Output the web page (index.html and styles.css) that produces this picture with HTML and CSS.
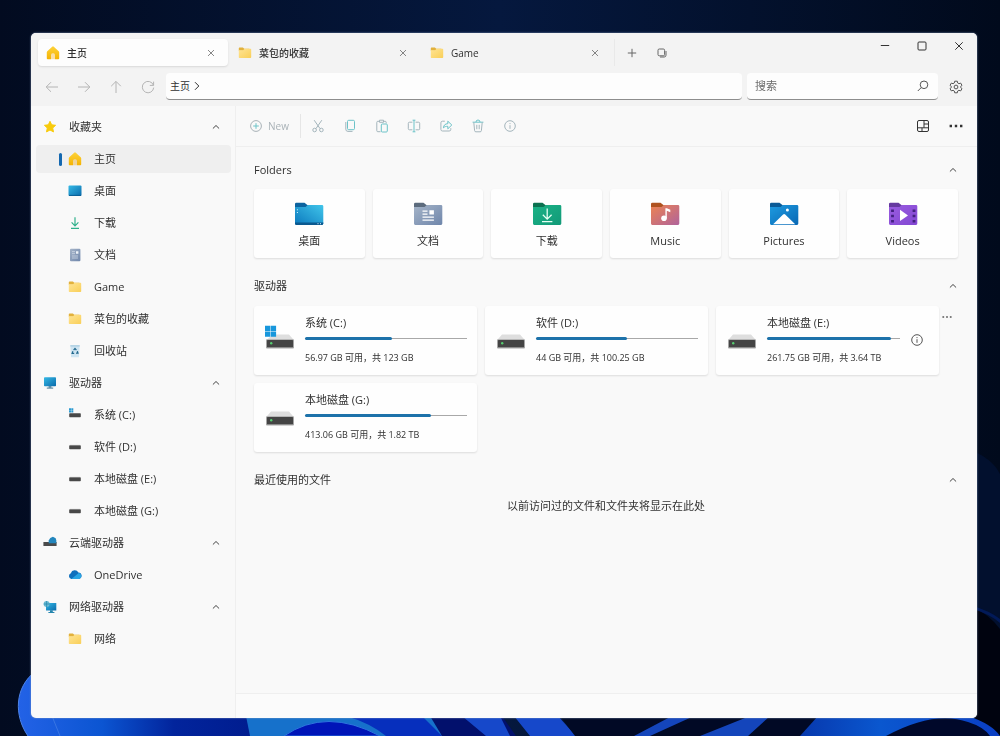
FILE: index.html
```
<!DOCTYPE html>
<html lang="zh-CN">
<head>
    <meta charset="UTF-8">
    <meta name="viewport" content="width=device-width, initial-scale=1.0">
    <title>主页 - Files</title>
    <link rel="stylesheet" href="styles.css">
</head>
<body>
    <!-- shared icons -->
    <svg class="sprite" aria-hidden="true">
        <defs>
            <linearGradient id="g-gold" x1="0" y1="0" x2="0" y2="1"><stop offset="0" stop-color="#fdd23a"/><stop offset="1" stop-color="#f5b301"/></linearGradient>
            <linearGradient id="g-yellow" x1="0" y1="0" x2="1" y2="1"><stop offset="0" stop-color="#ffe494"/><stop offset="1" stop-color="#f9cf58"/></linearGradient>
            <linearGradient id="g-blue" x1="0" y1="0" x2="1" y2="1"><stop offset="0" stop-color="#35b9e6"/><stop offset="1" stop-color="#0a6bab"/></linearGradient>
            <linearGradient id="g-desk" x1="0" y1="1" x2="1" y2="0"><stop offset="0" stop-color="#0b78bd"/><stop offset="1" stop-color="#41c5ea"/></linearGradient>
            <linearGradient id="g-doc" x1="0" y1="0" x2="1" y2="1"><stop offset="0" stop-color="#a5b4c8"/><stop offset="1" stop-color="#6f86ab"/></linearGradient>
            <linearGradient id="g-down" x1="0" y1="0" x2="1" y2="1"><stop offset="0" stop-color="#1bb286"/><stop offset="1" stop-color="#129a78"/></linearGradient>
            <linearGradient id="g-music" x1="0" y1="0" x2="1" y2="1"><stop offset="0" stop-color="#ec8352"/><stop offset="1" stop-color="#b0639b"/></linearGradient>
            <linearGradient id="g-pic" x1="0" y1="0" x2="1" y2="1"><stop offset="0" stop-color="#1e9be0"/><stop offset="1" stop-color="#0867b4"/></linearGradient>
            <linearGradient id="g-video" x1="0" y1="0" x2="1" y2="1"><stop offset="0" stop-color="#9a5ce0"/><stop offset="1" stop-color="#8247d2"/></linearGradient>
        </defs>
        <symbol id="i-home" viewBox="0 0 14 14"><path d="M6.2.7a1.2 1.2 0 0 1 1.6 0l4.9 4.5c.3.3.5.7.5 1.1v5.9c0 .7-.5 1.1-1.1 1.1H9V9.2a2 2 0 0 0-4 0v4.1H1.9c-.6 0-1.1-.4-1.1-1.1V6.3c0-.4.2-.8.5-1.1z" fill="url(#g-gold)"/><path d="M5 9.2a2 2 0 0 1 4 0v4.1H5z" fill="#eda20c" opacity=".35"/></symbol>
        <symbol id="i-star" viewBox="0 0 14 14"><path d="M7 1.3l1.7 3.5 3.9.5-2.9 2.7.8 3.9L7 10l-3.5 1.9.8-3.9-2.9-2.7 3.9-.5z" fill="#f8cb0c" stroke="#f8cb0c" stroke-linejoin="round"/></symbol>
        <symbol id="i-folder" viewBox="0 0 14 14"><path d="M.8 2.2c0-.4.3-.7.7-.7h3.4l1.4 1.3h5v2H.8z" fill="#e2b13c"/><path d="M.8 4.2h4.4l1.3-1.4h6c.4 0 .7.3.7.7v7.7c0 .4-.3.7-.7.7h-11c-.4 0-.7-.3-.7-.7z" fill="url(#g-yellow)"/></symbol>
        <symbol id="i-desktop" viewBox="0 0 14 14"><rect x=".5" y="1.5" width="13" height="10.5" rx="1" fill="url(#g-blue)"/><path d="M1 11.4h12" stroke="#0b5f94"/></symbol>
        <symbol id="i-download" viewBox="0 0 14 14"><path d="M7 1.3v8.2M3.6 6.4L7 9.8l3.4-3.4M3 12.4h8" fill="none" stroke="#2fb08b" stroke-width="1.2"/></symbol>
        <symbol id="i-document" viewBox="0 0 14 14"><rect x="2" y=".8" width="10.4" height="12.4" rx="1" fill="url(#g-doc)"/><path d="M4 3.7h3M4 5.7h3M4 8h6M4 10h6" stroke="#e6edf5" stroke-width=".6"/><path d="M8 3.2h2.4v2.6H8z" fill="#eef3f8"/></symbol>
        <symbol id="i-recycle" viewBox="0 0 14 14"><path d="M2.3 1.3h9.4l-.8 11.9H3.1z" fill="#cfe5f2"/><path d="M2.3 1.3h9.4v1.2H2.4z" fill="#a9cce0"/><path d="M5.6 6.1L7 4.4l1.4 1.7M9.3 7.1l.7 2.1H8M6.2 9.4H4.1l.8-2.2" fill="none" stroke="#23698e" stroke-width="1.2"/></symbol>
        <symbol id="i-monitor" viewBox="0 0 14 14"><rect x="1" y="1.3" width="12" height="8.9" rx=".8" fill="url(#g-blue)"/><path d="M5.6 10.2h2.8v1.5H5.6z" fill="#417b9b"/><path d="M3.8 12.1h6.4" stroke="#477a94"/></symbol>
        <symbol id="i-disk" viewBox="0 0 14 14"><rect x="1.2" y="5.2" width="11.6" height="4" rx=".8" fill="#484848"/><path d="M2 5.4h10" stroke="#888" stroke-width=".7"/></symbol>
        <symbol id="i-sysdisk" viewBox="0 0 14 14"><path d="M1 .3h2v2H1zM3.3.3h2v2h-2zM1 2.6h2v2H1zM3.3 2.6h2v2h-2z" fill="#2b9ad1"/><rect x="1.2" y="5.2" width="11.6" height="4" rx=".7" fill="#484848"/></symbol>
        <symbol id="i-clouddisk" viewBox="0 0 14 14"><rect x=".4" y="6" width="13.2" height="4" rx=".5" fill="#4b4b4b"/><path d="M5.7 7.3V4.4l1.6-2.5 2.6-1.2 2.8 1.5.6 2.2v2.9z" fill="#2386bd"/></symbol>
        <symbol id="i-onedrive" viewBox="0 0 14 14"><path d="M3.3 10.9a3 3 0 0 1-.5-5.7 4.2 4.2 0 0 1 7.6-.8 3.3 3.3 0 0 1 .7 6.5z" fill="#1070bd"/><path d="M3.3 10.9l7.5-6c3.6.7 3.2 6-.2 6z" fill="#29a5e4"/></symbol>
        <symbol id="i-netdisk" viewBox="0 0 14 14"><path d="M3 3h10.3v7.4H3z" fill="url(#g-blue)"/><path d="M7 10.2h2.8v2.2H7zM5.4 12.1h6v1h-6z" fill="#2686ad"/><circle cx="3.6" cy="4" r="3" fill="#6cbbd3"/><path d="M3.6 1v6M.7 4h6" stroke="#2686ad" stroke-width=".7"/></symbol>
        <symbol id="i-close" viewBox="0 0 10 10"><path d="M1.3 1.3l7.4 7.4M8.7 1.3L1.3 8.7"/></symbol>
        <symbol id="i-up" viewBox="0 0 10 10"><path d="M1.9 6.5L5 3.5l3.1 3"/></symbol>
        <symbol id="i-info" viewBox="0 0 14 14"><circle cx="7" cy="7" r="5.3"/><path d="M7 6.2v3.6M7 4.1v1"/></symbol>
        <symbol id="i-dots" viewBox="0 0 14 14"><path d="M.6 5.8H3v2.4H.6zM5.8 5.8h2.4v2.4H5.8zM11 5.8h2.4v2.4H11z" fill="currentColor" stroke="none"/></symbol>
        <symbol id="i-drive" viewBox="0 0 30 26"><path d="M6 10.4h18l4.4 5H1.6z" fill="#dedede"/><rect x="1" y="15.2" width="28" height="9.3" rx="1" fill="#a5a5a5"/><rect x="2" y="16" width="26" height="7.3" rx=".5" fill="#444"/><circle cx="6.2" cy="19.2" r="1.2" fill="#55ce70"/></symbol>
        <symbol id="i-windrive" viewBox="0 0 30 26"><path d="M8 10.4h16l4.4 5H2z" fill="#dedede"/><rect x="1" y="15.2" width="28" height="9.3" rx="1" fill="#a5a5a5"/><rect x="2" y="16" width="26" height="7.3" rx=".5" fill="#444"/><circle cx="6.2" cy="19.2" r="1.2" fill="#55ce70"/><path d="M0 1.7h5.3V7H0zM5.8 1.7h5.3V7H5.8zM0 7.5h5.3v5.3H0zM5.8 7.5h5.3v5.3H5.8z" fill="#1897dc"/></symbol>
    </svg>

    <svg class="wallpaper" viewBox="0 0 1000 736" preserveAspectRatio="none" aria-hidden="true">
        <defs>
            <linearGradient id="w-sky"><stop offset="0" stop-color="#020b20"/><stop offset=".5" stop-color="#05183e"/><stop offset="1" stop-color="#010a1c"/></linearGradient>
            <linearGradient id="w-petal"><stop offset="0" stop-color="#2362e6"/><stop offset=".35" stop-color="#0b55d2"/><stop offset=".65" stop-color="#02249c"/><stop offset="1" stop-color="#001c8e"/></linearGradient>
            <linearGradient id="w-right"><stop offset="0" stop-color="#0738ad"/><stop offset=".4" stop-color="#0a57cf"/><stop offset="1" stop-color="#0b3fc4"/></linearGradient>
        </defs>
        <path d="M0 0h1000v736H0z" fill="url(#w-sky)"/>
        <path d="M970 450q22 8 30 24v262h-30z" fill="#02102e"/>
        <path d="M970 605q20 10 30 24v107h-30z" fill="#00030f"/>
        <path d="M970 605q20 6 30 14v4q-10-9-30-15z" fill="#021a58"/>
        <path d="M36 671C14 687 14 716 28 736h230V671z" fill="url(#w-petal)"/>
        <path d="M36 671C14 687 14 716 28 736" fill="none" stroke="#4c83e8"/>
        <path d="M52 716l8 20" stroke="#4e86e6" opacity=".6"/>
        <path d="M246 716h190l12 20H250z" fill="#1671cb"/>
        <path d="M284 736q42-29 96 0z" fill="#0015b8" stroke="#2c76de"/>
        <path d="M346 716h76l20 20h-56q-16-13-40-20z" fill="#062fbd"/>
        <path d="M430 716h72l14 20h-74z" fill="#02106c"/>
        <path d="M462 716h38l10 20h-24zM514 716h44l18 20h-46z" fill="#1648ca"/>
        <path d="M560 716h290l-50 20H575z" fill="#010925"/>
        <path d="M650 736l44-20h-22l-38 20zM700 736l50-20h20l-22 20z" fill="#1445bb"/>
        <path d="M800 736l18-20h150q24 8 32 20z" fill="url(#w-right)"/>
        <path d="M886 736q48-26 82-14 16 5 22 14z" fill="#00082a"/>
    </svg>

    <div class="window">
        <header class="header">
            <div class="titlebar">
                <div class="tabs">
                    <div class="tab active">
                        <button class="tab-label"><svg class="icon"><use href="#i-home"/></svg>主页</button>
                        <button class="tab-close" aria-label="关闭 主页"><svg class="line small"><use href="#i-close"/></svg></button>
                    </div>
                    <div class="tab">
                        <button class="tab-label"><svg class="icon"><use href="#i-folder"/></svg>菜包的收藏</button>
                        <button class="tab-close" aria-label="关闭 菜包的收藏"><svg class="line small"><use href="#i-close"/></svg></button>
                    </div>
                    <div class="tab">
                        <button class="tab-label"><svg class="icon"><use href="#i-folder"/></svg>Game</button>
                        <button class="tab-close" aria-label="关闭 Game"><svg class="line small"><use href="#i-close"/></svg></button>
                    </div>
                    <div class="tab-actions">
                        <button aria-label="新标签页"><svg class="line small" viewBox="0 0 10 10"><path d="M5 .8v8.4M.8 5h8.4"/></svg></button>
                        <button aria-label="标签页列表"><svg class="line small" viewBox="0 0 10 10"><rect x="1" y="1" width="6.6" height="6.8" rx="1.3"/><path d="M3 9h4.2A1.8 1.8 0 0 0 9 7.2V3"/></svg></button>
                    </div>
                </div>
                <div class="window-controls">
                    <button aria-label="最小化"><svg class="line small" viewBox="0 0 10 10"><path d="M.8 4.5h8.4"/></svg></button>
                    <button aria-label="最大化"><svg class="line small" viewBox="0 0 10 10"><rect x="1" y="1" width="8" height="8" rx="1"/></svg></button>
                    <button aria-label="关闭"><svg class="line small"><use href="#i-close"/></svg></button>
                </div>
            </div>
            <div class="navbar">
                <div class="nav-buttons">
                    <button aria-label="后退"><svg class="line" viewBox="0 0 14 14"><path d="M13 7H1.4M6 2.2L1.2 7 6 11.8"/></svg></button>
                    <button aria-label="前进"><svg class="line" viewBox="0 0 14 14"><path d="M1 7h11.6M8 2.2L12.8 7 8 11.8"/></svg></button>
                    <button aria-label="向上"><svg class="line" viewBox="0 0 14 14"><path d="M7 13V1.6M2.2 6.2L7 1.4l4.8 4.8"/></svg></button>
                    <button aria-label="刷新"><svg class="line" viewBox="0 0 14 14"><path d="M12.4 5.2A5.7 5.7 0 1 0 12.7 7.6M12.6 1.6v3.8H8.8"/></svg></button>
                </div>
                <nav class="address" aria-label="路径">
                    <a href="#">主页</a>
                    <svg class="line small" viewBox="0 0 10 10"><path d="M3 1.2L6.8 5 3 8.8"/></svg>
                </nav>
                <form class="search">
                    <input type="search" placeholder="搜索" aria-label="搜索">
                    <button type="button" aria-label="开始搜索"><svg class="line" viewBox="0 0 14 14"><circle cx="8" cy="5.8" r="3.8"/><path d="M5.2 8.6L1.8 12"/></svg></button>
                </form>
                <button class="settings" aria-label="设置"><svg class="line" viewBox="0 0 14 14"><path d="M5.7 1.2h2.6l.4 1.8 1.2.7 1.8-.6L13 5.4l-1.4 1.2v.8L13 8.6l-1.3 2.3-1.8-.6-1.2.7-.4 1.8H5.7L5.3 11l-1.2-.7-1.8.6L1 8.6l1.4-1.2v-.8L1 5.4l1.3-2.3 1.8.6L5.3 3z"/><circle cx="7" cy="7" r="1.9"/></svg></button>
            </div>
        </header>

        <div class="body">
            <aside class="sidebar">
                <button class="group"><svg class="icon"><use href="#i-star"/></svg><span>收藏夹</span><svg class="line small"><use href="#i-up"/></svg></button>
                <a class="item selected" href="#"><svg class="icon"><use href="#i-home"/></svg>主页</a>
                <a class="item" href="#"><svg class="icon"><use href="#i-desktop"/></svg>桌面</a>
                <a class="item" href="#"><svg class="icon"><use href="#i-download"/></svg>下载</a>
                <a class="item" href="#"><svg class="icon"><use href="#i-document"/></svg>文档</a>
                <a class="item" href="#"><svg class="icon"><use href="#i-folder"/></svg>Game</a>
                <a class="item" href="#"><svg class="icon"><use href="#i-folder"/></svg>菜包的收藏</a>
                <a class="item" href="#"><svg class="icon"><use href="#i-recycle"/></svg>回收站</a>
                <button class="group"><svg class="icon"><use href="#i-monitor"/></svg><span>驱动器</span><svg class="line small"><use href="#i-up"/></svg></button>
                <a class="item" href="#"><svg class="icon"><use href="#i-sysdisk"/></svg>系统 (C:)</a>
                <a class="item" href="#"><svg class="icon"><use href="#i-disk"/></svg>软件 (D:)</a>
                <a class="item" href="#"><svg class="icon"><use href="#i-disk"/></svg>本地磁盘 (E:)</a>
                <a class="item" href="#"><svg class="icon"><use href="#i-disk"/></svg>本地磁盘 (G:)</a>
                <button class="group"><svg class="icon"><use href="#i-clouddisk"/></svg><span>云端驱动器</span><svg class="line small"><use href="#i-up"/></svg></button>
                <a class="item" href="#"><svg class="icon"><use href="#i-onedrive"/></svg>OneDrive</a>
                <button class="group"><svg class="icon"><use href="#i-netdisk"/></svg><span>网络驱动器</span><svg class="line small"><use href="#i-up"/></svg></button>
                <a class="item" href="#"><svg class="icon"><use href="#i-folder"/></svg>网络</a>
            </aside>

            <main class="main">
                <div class="toolbar">
                    <button class="new"><svg class="line" viewBox="0 0 14 14"><circle cx="7" cy="7" r="5.4"/><path class="teal" d="M7 4.2v5.6M4.2 7h5.6"/></svg>New</button>
                    <div class="commands">
                        <button aria-label="剪切"><svg class="line" viewBox="0 0 14 14"><path d="M3.2 1.2l5.9 8.5M10.8 1.2L4.9 9.7"/><circle cx="3.6" cy="11" r="1.8"/><circle cx="10.4" cy="11" r="1.8"/></svg></button>
                        <button aria-label="复制"><svg class="line" viewBox="0 0 14 14"><path d="M2.8 3v7.2a2.2 2.2 0 0 0 2.2 2.2h4.5"/><rect class="teal" x="4.5" y="1.3" width="7" height="9.4" rx="1.2"/></svg></button>
                        <button aria-label="粘贴"><svg class="line" viewBox="0 0 14 14"><path d="M5.5 12.7H2.8a1 1 0 0 1-1-1V3.3a1 1 0 0 1 1-1h1.6M8.6 2.3h1.6a1 1 0 0 1 1 1v1M4.5 1.2h4v2.1h-4z"/><rect class="teal" x="6.3" y="5" width="6" height="8" rx="1"/></svg></button>
                        <button aria-label="重命名"><svg class="line" viewBox="0 0 14 14"><path d="M5.4 3.2H2.5a1.2 1.2 0 0 0-1.2 1.2v5.2a1.2 1.2 0 0 0 1.2 1.2h2.9M8.6 3.2h2.9a1.2 1.2 0 0 1 1.2 1.2v5.2a1.2 1.2 0 0 1-1.2 1.2H8.6"/><path class="teal" d="M7 1.2v11.6M5.6 1.2h2.8M5.6 12.8h2.8"/></svg></button>
                        <button aria-label="共享"><svg class="line" viewBox="0 0 14 14"><path d="M5.8 2.2H3.5a1.6 1.6 0 0 0-1.6 1.6v6.6A1.6 1.6 0 0 0 3.5 12h6.7a1.6 1.6 0 0 0 1.6-1.6V9.2"/><path class="teal" d="M4.4 8.8c.3-2.6 1.8-4.1 4.4-4.1V2.2l4 3.8-4 3.8V7.3c-2 0-3.2.4-4.4 1.5z"/></svg></button>
                        <button aria-label="删除"><svg class="line" viewBox="0 0 14 14"><path class="teal" d="M1.6 3.2h10.8M5 3a2 2 0 0 1 4 0"/><path d="M2.8 3.4l.8 8.2a1.3 1.3 0 0 0 1.3 1.2h4.2a1.3 1.3 0 0 0 1.3-1.2l.8-8.2M5.8 5.8v4.4M8.2 5.8v4.4"/></svg></button>
                        <button aria-label="属性"><svg class="line"><use href="#i-info"/></svg></button>
                    </div>
                    <div class="view-options">
                        <button aria-label="布局"><svg class="line" viewBox="0 0 14 14"><rect x="1.5" y="1.5" width="11" height="11" rx="1.5"/><path d="M8 1.5v7.3M1.5 8.8h11M8 5h4.5M6 8.8v3.7"/></svg></button>
                        <button aria-label="更多"><svg class="line"><use href="#i-dots"/></svg></button>
                    </div>
                </div>

                <div class="content">
                    <section>
                        <button class="section-title"><span>Folders</span><svg class="line small"><use href="#i-up"/></svg></button>
                        <div class="folders">
                            <a class="folder" href="#">
                                <svg viewBox="0 0 30 26"><path d="M1 3a1.3 1.3 0 0 1 1.3-1.3h8.2L14 4.5V8H1z" fill="#0c639f"/><path d="M1 6h10.5L14 4h14a1.3 1.3 0 0 1 1.3 1.3v17.3a1.3 1.3 0 0 1-1.3 1.3H2.3A1.3 1.3 0 0 1 1 22.6z" fill="url(#g-desk)"/><path d="M1 21.6h28.3v1a1.3 1.3 0 0 1-1.3 1.3H2.3A1.3 1.3 0 0 1 1 22.6z" fill="#0b598f"/><path d="M3.4 8.3v1M3.4 11v1M23.5 22.7h1M26 22.7h1" stroke="#d6f3ff"/></svg>
                                桌面
                            </a>
                            <a class="folder" href="#">
                                <svg viewBox="0 0 30 26"><path d="M1 3a1.3 1.3 0 0 1 1.3-1.3h8.2L14 4.5V8H1z" fill="#5c6b7d"/><path d="M1 6h10.5L14 4h14a1.3 1.3 0 0 1 1.3 1.3v17.3a1.3 1.3 0 0 1-1.3 1.3H2.3A1.3 1.3 0 0 1 1 22.6z" fill="url(#g-doc)"/><path d="M9.5 10.2h5M9.5 13.2h5M9.5 16.2h11.4M9.5 19.2h11.4" stroke="#fff" stroke-width="1.2"/><path d="M16.4 9.2h4.5v4.3h-4.5z" fill="#fff"/></svg>
                                文档
                            </a>
                            <a class="folder" href="#">
                                <svg viewBox="0 0 30 26"><path d="M1 3a1.3 1.3 0 0 1 1.3-1.3h8.2L14 4.5V8H1z" fill="#0c7150"/><path d="M1 6h10.5L14 4h14a1.3 1.3 0 0 1 1.3 1.3v17.3a1.3 1.3 0 0 1-1.3 1.3H2.3A1.3 1.3 0 0 1 1 22.6z" fill="url(#g-down)"/><path d="M15.2 7.5v10.3M10.8 13.7l4.4 4.4 4.4-4.4M10 20.7h10.4" fill="none" stroke="#e5fff4" stroke-width="1.3"/></svg>
                                下载
                            </a>
                            <a class="folder" href="#">
                                <svg viewBox="0 0 30 26"><path d="M1 3a1.3 1.3 0 0 1 1.3-1.3h8.2L14 4.5V8H1z" fill="#af521f"/><path d="M1 6h10.5L14 4h14a1.3 1.3 0 0 1 1.3 1.3v17.3a1.3 1.3 0 0 1-1.3 1.3H2.3A1.3 1.3 0 0 1 1 22.6z" fill="url(#g-music)"/><circle cx="14" cy="17.2" r="2.8" fill="#fff"/><path d="M15.4 17.3V7.2h1.5l3.4 1.6v2.5l-3.5-1.5v7.5z" fill="#fff"/></svg>
                                Music
                            </a>
                            <a class="folder" href="#">
                                <svg viewBox="0 0 30 26"><path d="M1 3a1.3 1.3 0 0 1 1.3-1.3h8.2L14 4.5V8H1z" fill="#0b5a96"/><path d="M1 6h10.5L14 4h14a1.3 1.3 0 0 1 1.3 1.3v17.3a1.3 1.3 0 0 1-1.3 1.3H2.3A1.3 1.3 0 0 1 1 22.6z" fill="url(#g-pic)"/><path d="M4.1 23.2l10-9.7a1.5 1.5 0 0 1 2.1 0l10 9.7z" fill="#fff"/><circle cx="18.4" cy="8.9" r="1.5" fill="#fff"/></svg>
                                Pictures
                            </a>
                            <a class="folder" href="#">
                                <svg viewBox="0 0 30 26"><path d="M1 3a1.3 1.3 0 0 1 1.3-1.3h8.2L14 4.5V8H1z" fill="#65399f"/><path d="M1 6h10.5L14 4h14a1.3 1.3 0 0 1 1.3 1.3v17.3a1.3 1.3 0 0 1-1.3 1.3H2.3A1.3 1.3 0 0 1 1 22.6z" fill="url(#g-video)"/><path d="M4.5 8.5v14M26 8.5v14" stroke="#432080" stroke-width="2.8" stroke-dasharray="2.6 2.6"/><path d="M12 8.8l8 5.6-8 5.6z" fill="#fff"/></svg>
                                Videos
                            </a>
                        </div>
                    </section>

                    <section>
                        <button class="section-title"><span>驱动器</span><svg class="line small"><use href="#i-up"/></svg></button>
                        <div class="drives-row">
                            <div class="drives">
                                <a class="drive" href="#">
                                    <svg class="drive-icon"><use href="#i-windrive"/></svg>
                                    <div class="drive-info">
                                        <span>系统 (C:)</span>
                                        <div class="usage"><div class="used" style="width: 54%"></div></div>
                                        <small>56.97 GB 可用，共 123 GB</small>
                                    </div>
                                </a>
                                <a class="drive" href="#">
                                    <svg class="drive-icon"><use href="#i-drive"/></svg>
                                    <div class="drive-info">
                                        <span>软件 (D:)</span>
                                        <div class="usage"><div class="used" style="width: 56%"></div></div>
                                        <small>44 GB 可用，共 100.25 GB</small>
                                    </div>
                                </a>
                                <a class="drive" href="#">
                                    <svg class="drive-icon"><use href="#i-drive"/></svg>
                                    <div class="drive-info">
                                        <span>本地磁盘 (E:)</span>
                                        <div class="usage"><div class="used" style="width: 93%"></div></div>
                                        <small>261.75 GB 可用，共 3.64 TB</small>
                                    </div>
                                    <svg class="line drive-hint"><use href="#i-info"/></svg>
                                </a>
                                <a class="drive" href="#">
                                    <svg class="drive-icon"><use href="#i-drive"/></svg>
                                    <div class="drive-info">
                                        <span>本地磁盘 (G:)</span>
                                        <div class="usage"><div class="used" style="width: 78%"></div></div>
                                        <small>413.06 GB 可用，共 1.82 TB</small>
                                    </div>
                                </a>
                            </div>
                            <button class="drives-more" aria-label="更多选项"><svg class="line small"><use href="#i-dots"/></svg></button>
                        </div>
                    </section>

                    <section>
                        <button class="section-title"><span>最近使用的文件</span><svg class="line small"><use href="#i-up"/></svg></button>
                        <p class="empty">以前访问过的文件和文件夹将显示在此处</p>
                    </section>
                </div>

                <footer class="statusbar"></footer>
            </main>
        </div>
    </div>
</body>
</html>
```

FILE: styles.css
```
* {
    box-sizing: border-box;
}

body {
    margin: 0;
    min-height: 100vh;
    display: flex;
    padding: 33px 23px 18px 31px;
    background-color: #020b20;
    color: #303030;
    font-family: "Open Sans", "Noto Sans CJK SC", sans-serif;
    font-size: 11px;
    line-height: 16px;
}

button {
    border: 0;
    padding: 0;
    background: none;
    color: inherit;
    font: inherit;
    text-align: left;
    cursor: pointer;
    display: flex;
    align-items: center;
    justify-content: center;
}

a {
    color: inherit;
    text-decoration: none;
}

svg {
    display: block;
    flex: none;
}

.sprite {
    position: absolute;
    width: 0;
    height: 0;
}

.wallpaper {
    position: fixed;
    inset: 0;
    width: 100%;
    height: 100%;
    z-index: -1;
}

.icon {
    width: 14px;
    height: 14px;
}

.line {
    width: 14px;
    height: 14px;
    fill: none;
    stroke: currentColor;
    stroke-width: 1;
}

.line.small {
    width: 10px;
    height: 10px;
}

.window {
    flex: 1;
    min-width: 0;
    display: flex;
    flex-direction: column;
    background-color: #f9f9f9;
    border-radius: 5px;
    overflow: hidden;
    box-shadow: 0 0 2px #8fa2c4;
}

/* title bar and tabs */
.header {
    background-color: #f3f3f3;
    padding-bottom: 6px;
}

.titlebar {
    display: flex;
    justify-content: space-between;
    height: 40px;
    padding: 6px 8px 0 7px;
}

.tabs {
    display: flex;
    align-items: flex-start;
    gap: 2px;
}

.tab {
    display: flex;
    align-items: center;
    width: 190px;
    height: 27px;
    padding: 0 13px 0 8px;
    border-radius: 4px;
}

.tab.active {
    background-color: #fdfdfd;
    box-shadow: 0 1px 2px #d8d8d8;
}

.tab-label {
    flex: 1;
    justify-content: flex-start;
    gap: 7px;
    font-size: 10px;
    font-weight: 500;
}

.tab-close,
.tab-actions {
    color: #666;
}

.tab .tab-close svg {
    width: 8px;
    height: 8px;
}

.tab-actions {
    display: flex;
    align-items: center;
    gap: 20px;
    height: 27px;
    padding-left: 12px;
    border-left: 1px solid #e9e9e9;
}

.window-controls {
    display: flex;
    align-items: flex-start;
    color: #333;
    gap: 27px;
    padding: 2px 5px 0 0;
}

/* navigation row */
.navbar {
    display: flex;
    align-items: center;
    gap: 5px;
    padding: 0 14px;
}

.nav-buttons {
    display: flex;
    gap: 18px;
    margin-right: 6px;
    color: #b4b4b4;
}

.address,
.search {
    display: flex;
    align-items: center;
    height: 27px;
    background-color: #fdfdfd;
    border-bottom: 1px solid #8d8d8d;
    border-radius: 4px;
}

.address {
    flex: 1;
    gap: 2px;
    padding-left: 4px;
    font-size: 10px;
}

.search {
    width: 191px;
    padding: 0 8px;
    color: #555;
}

.search input {
    flex: 1;
    min-width: 0;
    border: 0;
    padding: 0;
    outline: none;
    background: none;
    color: inherit;
    font: inherit;
}

.search input::placeholder {
    color: #6b6b6b;
}

.settings {
    margin-left: 6px;
    color: #555;
}

.body {
    flex: 1;
    display: flex;
}

/* sidebar */
.sidebar {
    flex: none;
    width: 205px;
    display: flex;
    flex-direction: column;
    gap: 4px;
    padding: 7px 4px 20px 5px;
    border-right: 1px solid #efefef;
}

.group,
.item {
    display: flex;
    align-items: center;
    height: 28px;
    border-radius: 4px;
}

.group {
    gap: 12px;
    padding: 0 10px 0 7px;
}

.group span {
    flex: 1;
}

.item {
    gap: 12px;
    padding-left: 32px;
}

.item.selected {
    padding-left: 23px;
    background-color: #efefef;
}

.item.selected::before {
    content: "";
    width: 3px;
    height: 13px;
    margin-right: -6px;
    border-radius: 2px;
    background-color: #1468b0;
}

/* main area */
.main {
    flex: 1;
    min-width: 0;
    display: flex;
    flex-direction: column;
}

.toolbar {
    display: flex;
    align-items: center;
    height: 41px;
    padding: 0 14px 0 13px;
    border-bottom: 1px solid #efefef;
}

.new {
    gap: 5px;
    height: 24px;
    padding-right: 11px;
    border-right: 1px solid #e6e6e6;
    color: #a9b2b7;
    font-size: 10px;
}

.commands {
    display: flex;
    gap: 18px;
    margin-left: 10px;
    color: #a4b5bc;
}

.teal {
    stroke: #6cc3c8;
}

.view-options {
    display: flex;
    gap: 19px;
    margin-left: auto;
    color: #333;
}

.content {
    flex: 1;
    display: flex;
    flex-direction: column;
    gap: 18px;
    padding: 13px 19px 18px 18px;
}

.section-title {
    width: 100%;
    height: 20px;
    justify-content: space-between;
}

.section-title svg,
.group .small {
    color: #444;
}

.folders {
    display: grid;
    grid-template-columns: repeat(6, 1fr);
    gap: 8px;
    margin-top: 9px;
}

.folder,
.drive {
    display: flex;
    align-items: center;
    height: 69px;
    background-color: #fefefe;
    border-radius: 3px;
    box-shadow: 0 1px 2px #dcdcdc;
}

.folder {
    flex-direction: column;
    justify-content: center;
    gap: 6px;
    padding-top: 3px;
}

.folder svg {
    width: 30px;
    height: 26px;
}

.drives-row {
    display: flex;
    align-items: flex-start;
    margin-top: 10px;
}

.drives {
    flex: 1;
    display: grid;
    grid-template-columns: repeat(3, 1fr);
    gap: 8px;
}

.drives-more {
    margin-left: 3px;
    padding: 6px 6px 0 0;
    color: #555;
}

.drive {
    gap: 10px;
    padding: 0 10px 0 11px;
}

.drive-icon {
    width: 30px;
    height: 26px;
    margin-bottom: 8px;
}

.drive-info {
    flex: 1;
    min-width: 0;
    display: flex;
    flex-direction: column;
}

.drive-info small {
    margin-top: 10px;
    font-size: 9px;
    line-height: 16px;
}

.usage {
    height: 3px;
    margin-top: 6px;
    background: linear-gradient(#a8a8a8, #a8a8a8) center / 100% 1px no-repeat;
}

.used {
    height: 3px;
    border-radius: 2px;
    background-color: #1d72aa;
}

.drive-hint {
    margin: 0 5px 2px 0;
    color: #555;
}

.empty {
    margin: 8px 0 0;
    text-align: center;
}

.statusbar {
    height: 25px;
    border-top: 1px solid #efefef;
    background-color: #fbfbfb;
}
```
